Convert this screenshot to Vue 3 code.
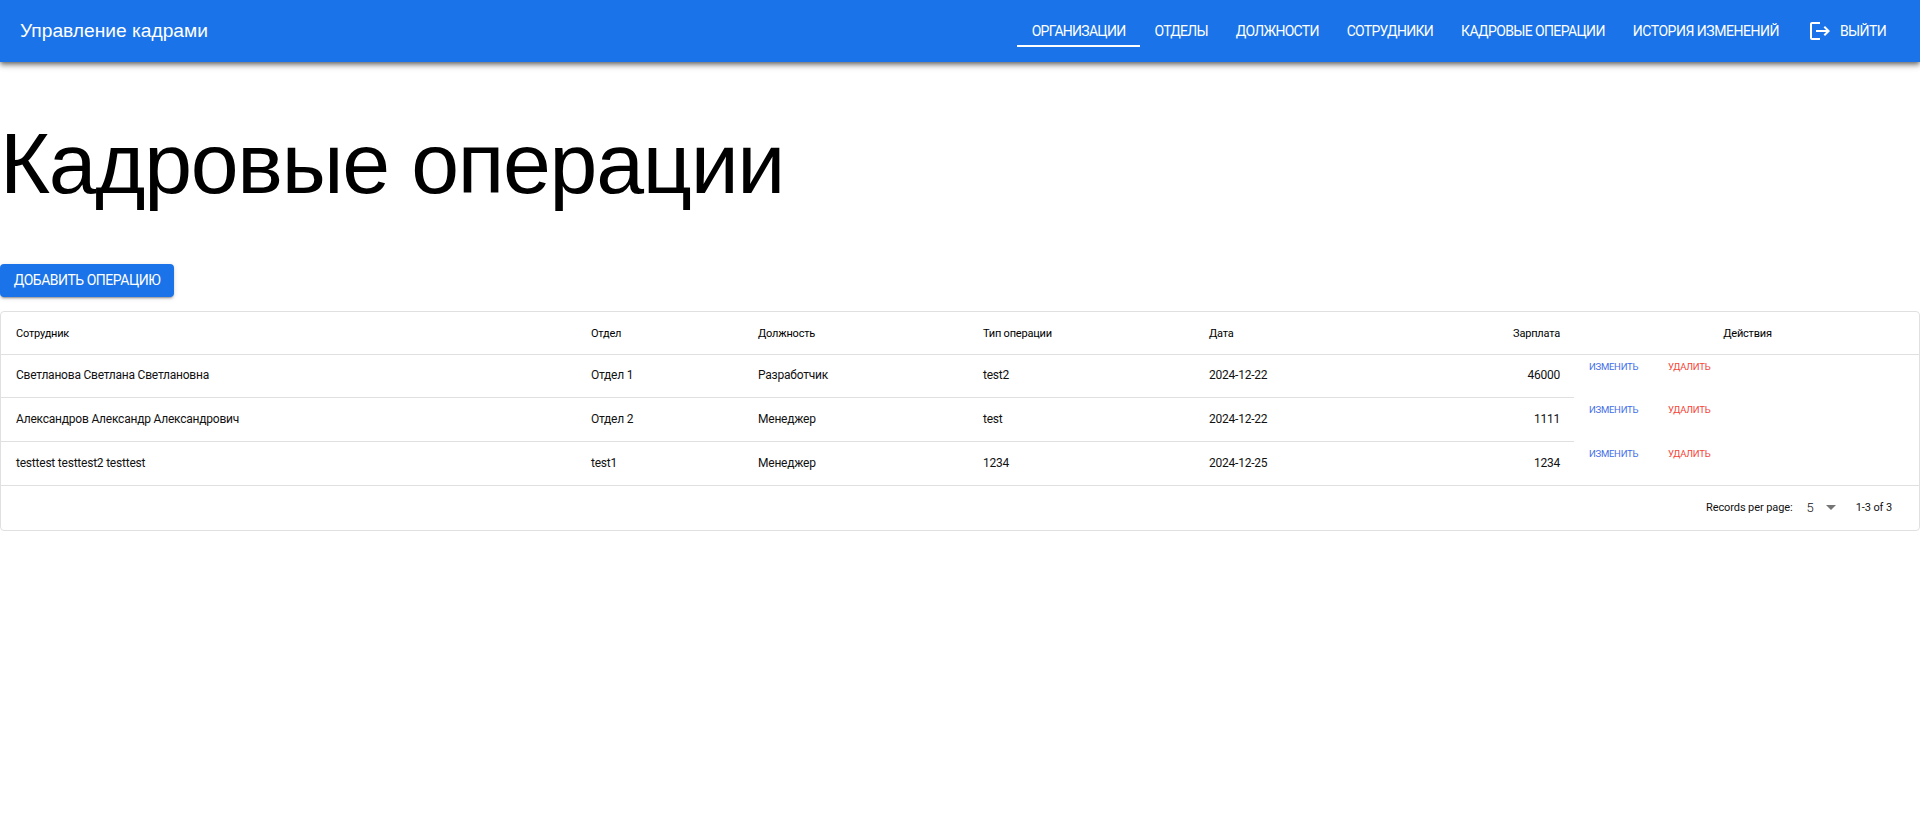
<template>
  <div class="page">
    <header class="appbar">
      <div class="brand">Управление кадрами</div>
      <nav class="nav">
        <a v-for="item in navItems" :key="item" class="nav-link" :class="{ active: item === 'Организации' }">{{ item }}</a>
        <a class="nav-link logout">
          <svg class="logout-icon" viewBox="0 0 24 24" fill="#fff">
            <path d="M17 7l-1.41 1.41L18.17 11H8v2h10.17l-2.58 2.58L17 17l5-5zM4 5h8V3H4c-1.1 0-2 .9-2 2v14c0 1.1.9 2 2 2h8v-2H4V5z" />
          </svg>
          Выйти
        </a>
      </nav>
    </header>

    <main>
      <h1 class="title">Кадровые операции</h1>
      <button class="add-btn">Добавить операцию</button>

      <div class="card">
        <table class="grid">
          <colgroup>
            <col v-for="w in colWidths" :style="{ width: w + 'px' }" />
          </colgroup>
          <thead>
            <tr>
              <th>Сотрудник</th>
              <th>Отдел</th>
              <th>Должность</th>
              <th>Тип операции</th>
              <th>Дата</th>
              <th class="num">Зарплата</th>
              <th class="center">Действия</th>
            </tr>
          </thead>
          <tbody>
            <tr v-for="row in rows" :key="row.name" :style="{ height: row.height + 'px' }">
              <td>{{ row.name }}</td>
              <td>{{ row.dept }}</td>
              <td>{{ row.position }}</td>
              <td>{{ row.type }}</td>
              <td>{{ row.date }}</td>
              <td class="num">{{ row.salary }}</td>
              <td class="actions">
                <div class="actions-inner">
                  <button class="link edit">Изменить</button>
                  <button class="link remove">Удалить</button>
                </div>
              </td>
            </tr>
          </tbody>
        </table>
        <div class="pager">
          <span>Records per page:</span>
          <span class="per-page">5</span>
          <svg class="caret" viewBox="0 0 24 24" fill="#757575"><path d="M7 10l5 5 5-5z" /></svg>
          <span class="range">1-3 of 3</span>
        </div>
      </div>
    </main>
  </div>
</template>

<script setup>
const navItems = ['Организации', 'Отделы', 'Должности', 'Сотрудники', 'Кадровые операции', 'История изменений']

const colWidths = [575, 167, 225, 226, 225, 155, 345]

const rows = [
  { name: 'Светланова Светлана Светлановна', dept: 'Отдел 1', position: 'Разработчик', type: 'test2', date: '2024-12-22', salary: 46000, height: 43 },
  { name: 'Александров Александр Александрович', dept: 'Отдел 2', position: 'Менеджер', type: 'test', date: '2024-12-22', salary: 1111, height: 44 },
  { name: 'testtest testtest2 testtest', dept: 'test1', position: 'Менеджер', type: '1234', date: '2024-12-25', salary: 1234, height: 44 }
]
</script>

<style>
html,
body {
  margin: 0;
  background: #fff;
}
</style>

<style scoped>
.page {
  font-family: Roboto, "Liberation Sans", sans-serif;
  color: #000;
  min-height: 816px;
}

.appbar {
  height: 62px;
  background: #1a73e8;
  display: flex;
  align-items: center;
  justify-content: space-between;
  padding: 0 24px 0 20px;
  box-shadow: 0 2px 4px -1px rgba(0, 0, 0, 0.45), 0 4px 5px 0 rgba(0, 0, 0, 0.25), 0 1px 10px 0 rgba(0, 0, 0, 0.12);
}

.brand {
  font-family: "Liberation Sans", Arial, sans-serif;
  font-size: 19.2px;
  color: #fff;
  margin-top: -1px;
}

.nav {
  display: flex;
  align-items: center;
  margin-top: -1px;
}

.nav-link {
  position: relative;
  display: flex;
  align-items: center;
  height: 36px;
  padding: 0 14px;
  box-sizing: border-box;
  font-size: 14px;
  line-height: 36px;
  color: #fff;
  text-transform: uppercase;
  white-space: nowrap;
  letter-spacing: -0.72px;
}

.nav-link:nth-child(5) {
  letter-spacing: -0.62px;
}

.nav-link:nth-child(6) {
  letter-spacing: -0.48px;
}

.nav-link.active {
  padding: 0 15px;
}

.nav-link.active::after {
  content: "";
  position: absolute;
  left: 0;
  right: 0;
  bottom: 2px;
  height: 2px;
  background: #fff;
}

.nav-link.logout {
  padding-left: 15px;
  padding-right: 10px;
  letter-spacing: -0.62px;
}

.logout-icon {
  width: 24px;
  height: 24px;
  margin-right: 8px;
}

.title {
  margin: 0;
  padding-top: 51px;
  height: 151px;
  font-family: "Liberation Sans", Arial, sans-serif;
  font-size: 86px;
  line-height: 100px;
  font-weight: 400;
  letter-spacing: -1.3px;
}

.add-btn {
  display: block;
  width: 174px;
  height: 33px;
  padding: 0 0 1px;
  border: 0;
  border-radius: 4px;
  background: #1a73e8;
  color: #fff;
  font-family: inherit;
  font-size: 14px;
  letter-spacing: -0.47px;
  text-transform: uppercase;
  box-shadow: 0 3px 1px -2px rgba(0, 0, 0, 0.2), 0 2px 2px 0 rgba(0, 0, 0, 0.14), 0 1px 5px 0 rgba(0, 0, 0, 0.12);
}

.card {
  margin-top: 14px;
  height: 218px;
  border: 1px solid #e0e0e0;
  border-radius: 4px;
  box-sizing: content-box;
  width: 1918px;
}

.grid {
  width: 1918px;
  table-layout: fixed;
  border-collapse: separate;
  border-spacing: 0;
}

th,
td {
  padding: 0 16px 0 15px;
  box-sizing: border-box;
  text-align: left;
  border-bottom: 1px solid #e0e0e0;
  white-space: nowrap;
}

thead tr {
  height: 43px;
}

th {
  font-size: 11px;
  font-weight: 400;
  letter-spacing: -0.2px;
}

td {
  padding-bottom: 2px;
  font-size: 12px;
  letter-spacing: -0.22px;
  color: #111;
}

th.num,
td.num {
  text-align: right;
  padding-right: 14px;
}

th.center {
  text-align: center;
  padding-left: 18px;
}

td.actions {
  padding: 0;
  vertical-align: top;
  border-bottom-color: transparent;
}

tr:last-child td.actions {
  border-bottom-color: #e0e0e0;
}

.actions-inner {
  display: flex;
  padding: 5px 0 0 15px;
  gap: 30px;
}

.link {
  background: none;
  border: 0;
  padding: 0;
  font-family: inherit;
  font-size: 9.5px;
  line-height: 14px;
  letter-spacing: -0.25px;
  text-align: left;
  text-transform: uppercase;
}

.edit {
  width: 49px;
  color: #3f6fe8;
}

.remove {
  color: #f44336;
}

.pager {
  height: 44px;
  box-sizing: border-box;
  padding: 0 27px 2px 0;
  display: flex;
  align-items: center;
  justify-content: flex-end;
  font-size: 11px;
  letter-spacing: -0.1px;
  color: #111;
}

.per-page {
  margin-left: 14px;
  font-size: 13px;
  font-weight: 300;
}

.caret {
  width: 24px;
  height: 24px;
  margin-left: 5px;
}

.range {
  margin-left: 13px;
}
</style>
